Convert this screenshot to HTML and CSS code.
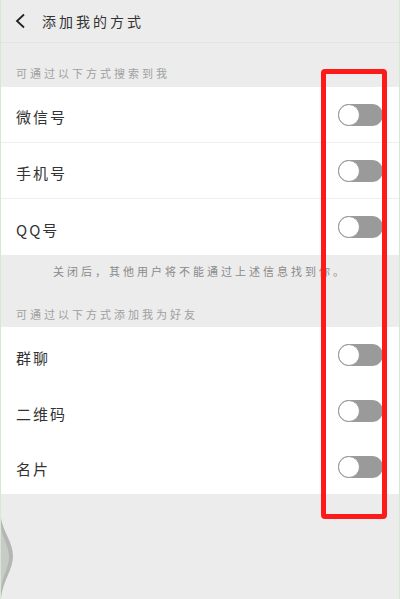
FILE: index.html
```html
<!DOCTYPE html>
<html lang="zh-CN">
<head>
<meta charset="utf-8">
<title>添加我的方式</title>
<link rel="stylesheet" href="styles.css">
</head>
<body>
<div class="app">
  <header class="header">
    <svg class="back" width="12" height="16" viewBox="0 0 12 16"><path d="M10 1.5 L3 8 L10 14.5" fill="none" stroke="#222" stroke-width="1.8"/></svg>
    <span class="title">添加我的方式</span>
  </header>
  <div class="section-label first">可通过以下方式搜索到我</div>
  <div class="list">
    <div class="row divided"><span class="row-text">微信号</span><span class="toggle"><span class="knob"></span></span></div>
    <div class="row divided"><span class="row-text">手机号</span><span class="toggle"><span class="knob"></span></span></div>
    <div class="row tall"><span class="row-text">QQ号</span><span class="toggle"><span class="knob"></span></span></div>
  </div>
  <div class="note">关闭后，其他用户将不能通过上述信息找到你。</div>
  <div class="section-label second">可通过以下方式添加我为好友</div>
  <div class="list">
    <div class="row tall"><span class="row-text">群聊</span><span class="toggle"><span class="knob"></span></span></div>
    <div class="row tall"><span class="row-text">二维码</span><span class="toggle"><span class="knob"></span></span></div>
    <div class="row"><span class="row-text">名片</span><span class="toggle"><span class="knob"></span></span></div>
  </div>
  <div class="highlight"></div>
  <svg class="blob" width="14" height="80" viewBox="0 0 14 80"><path d="M0 0 C2 14 12 24 12 38 C12 52 2 62 0 80 Z" fill="#b4b6b4"/><path d="M0 8 C1 20 8 28 8 39 C8 50 1 58 0 72 Z" fill="#c9cbc9"/></svg>
</div>
</body>
</html>
```
FILE: styles.css
```css
html, body {
  margin: 0;
  padding: 0;
}
body {
  width: 400px;
  height: 599px;
  overflow: hidden;
  background: #ececec;
  font-family: "Noto Sans CJK SC", "Noto Sans", sans-serif;
}
.app {
  position: relative;
  height: 599px;
  border-left: 1px solid #d3ead0;
  border-right: 1px solid #d3ead0;
  background: #ececec;
}
.header {
  height: 42px;
  border-bottom: 1px solid #e3e3e3;
  display: flex;
  align-items: center;
  padding-left: 13px;
}
.back {
  display: block;
}
.title {
  margin-left: 16px;
  font-size: 14px;
  letter-spacing: 3px;
  color: #333;
}
.section-label {
  font-size: 11px;
  letter-spacing: 3px;
  color: #a0a0a0;
  padding-left: 15px;
  line-height: 20px;
  box-sizing: border-box;
}
.section-label.first {
  height: 44px;
  padding-top: 20px;
}
.section-label.second {
  height: 30px;
  padding-top: 7px;
}
.list {
  background: #fff;
}
.row {
  height: 55px;
  display: flex;
  align-items: center;
  justify-content: space-between;
  padding: 0 16px 0 15px;
}
.row.tall {
  height: 56px;
}
.row.divided {
  border-bottom: 1px solid #eeeeee;
}
.row-text {
  font-size: 15px;
  letter-spacing: 2px;
  color: #333;
  margin-top: 4px;
}
.toggle {
  width: 45px;
  height: 22px;
  border-radius: 11px;
  background: #9a9a9a;
  position: relative;
  display: block;
}
.knob {
  position: absolute;
  left: 0;
  top: 0;
  width: 22px;
  height: 22px;
  border-radius: 50%;
  background: #fff;
  border: 1px solid #9a9a9a;
  box-sizing: border-box;
}
.note {
  height: 42px;
  line-height: 20px;
  padding-top: 6px;
  box-sizing: border-box;
  text-align: center;
  font-size: 11px;
  letter-spacing: 3px;
  color: #8a8a8a;
}
.highlight {
  position: absolute;
  left: 320px;
  top: 69px;
  width: 66px;
  height: 450px;
  border: 5px solid #ff1a1a;
  border-radius: 4px;
  box-sizing: border-box;
}
.blob {
  position: absolute;
  left: 0;
  top: 518px;
}
```
